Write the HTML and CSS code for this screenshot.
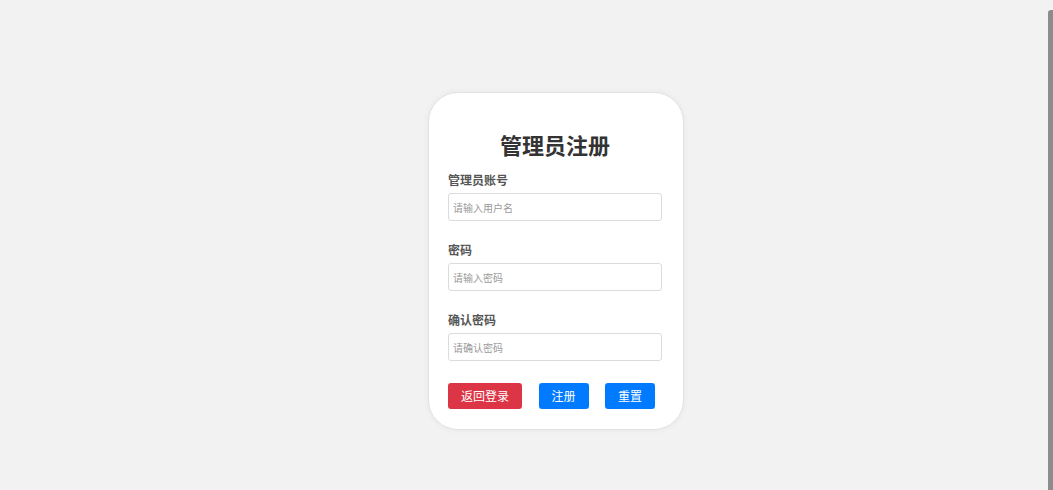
FILE: index.html
```html
<!DOCTYPE html>
<html lang="zh-CN">
<head>
<meta charset="utf-8">
<title>管理员注册</title>
<link rel="stylesheet" href="styles.css">
</head>
<body>
<div class="page">
  <form class="card">
    <h1 class="title">管理员注册</h1>
    <div class="group">
      <label class="label" for="u">管理员账号</label>
      <input class="input" id="u" type="text" placeholder="请输入用户名">
    </div>
    <div class="group">
      <label class="label" for="p">密码</label>
      <input class="input" id="p" type="password" placeholder="请输入密码">
    </div>
    <div class="group group-last">
      <label class="label" for="c">确认密码</label>
      <input class="input" id="c" type="password" placeholder="请确认密码">
    </div>
    <div class="actions">
      <button type="button" class="btn btn-red">返回登录</button>
      <button type="button" class="btn btn-blue">注册</button>
      <button type="button" class="btn btn-blue">重置</button>
    </div>
  </form>
</div>
<div class="scrollbar"></div>
</body>
</html>
```

FILE: styles.css
```css
html, body {
  margin: 0;
  padding: 0;
  background: #f2f2f2;
  font-family: "Noto Sans CJK SC", "Noto Sans", sans-serif;
  height: 100%;
  overflow: hidden;
}

.page {
  padding: 92px 0 0 428px;
}

.card {
  box-sizing: border-box;
  width: 256px;
  height: 338px;
  background: #ffffff;
  border: 1px solid #e2e2e2;
  border-radius: 30px;
  box-shadow: 0 0 6px rgba(0, 0, 0, 0.05);
  padding: 37px 21px 0 19px;
  display: flex;
  flex-direction: column;
}

.title {
  margin: 0 0 14px;
  font-size: 22px;
  line-height: 28px;
  font-weight: 700;
  color: #333333;
  text-align: center;
}

.group {
  display: flex;
  flex-direction: column;
  margin-bottom: 21px;
}

.group-last {
  margin-bottom: 22px;
}

.label {
  font-size: 12px;
  line-height: 16px;
  font-weight: 700;
  color: #555555;
  margin-bottom: 5px;
}

.input {
  box-sizing: border-box;
  width: 100%;
  height: 28px;
  margin: 0;
  border: 1px solid #dcdcdc;
  border-radius: 3px;
  padding: 0 4px;
  font-family: "Noto Sans CJK SC", "Noto Sans", sans-serif;
  font-size: 10px;
  color: #333;
  background: #fff;
  outline: none;
}

.input::placeholder {
  color: #9a9a9a;
}

.actions {
  display: flex;
  gap: 16.5px;
}

.btn {
  height: 26px;
  padding: 0 13px;
  border: none;
  border-radius: 3px;
  color: #ffffff;
  font-family: "Noto Sans CJK SC", "Noto Sans", sans-serif;
  font-size: 12px;
  line-height: 26px;
  cursor: pointer;
}

.btn-red {
  background: #dc3545;
}

.btn-blue {
  background: #007bff;
}

.scrollbar {
  position: fixed;
  top: 10px;
  right: 0;
  bottom: 0;
  width: 5px;
  background: #8c8c8c;
  border-radius: 3px 0 0 0;
}
```
